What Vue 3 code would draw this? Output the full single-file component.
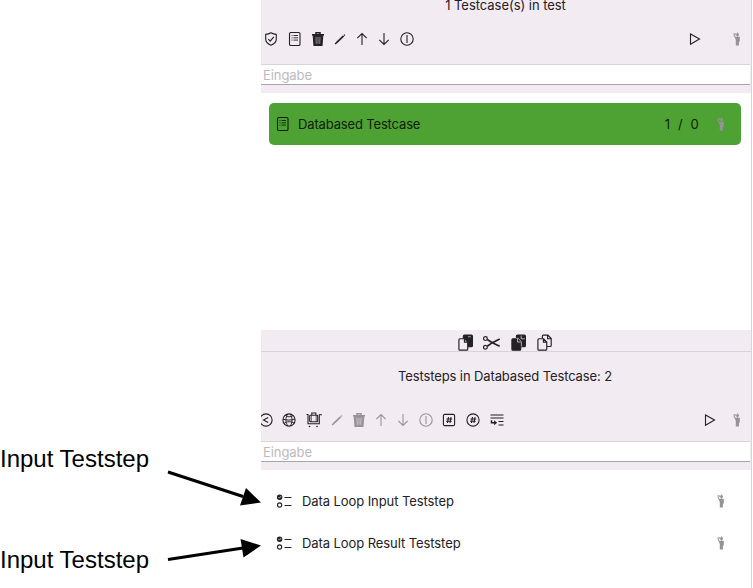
<script setup>
const icons = {
  shield: '<path d="M8 1.800c1.600 1 3.400 1.500 5.300 1.600v4.800c0 2.800-2.300 4.700-5.300 6-3-1.300-5.300-3.200-5.300-6V3.400C4.600 3.300 6.400 2.800 8 1.800Z"/><path d="m5.200 8 2 2.200 3.600-4.400"/>',
  form: '<rect x="2.500" y="1.500" width="10.500" height="13" rx="1.300"/><path d="M6.500 4.500h4.500M6.500 6.800h4.500M6.500 9.100h4.500M4.500 4.500h1M4.500 6.800h1M4.500 9.100h1" stroke-width=".9"/>',
  trash: '<path d="M2 3.700h12M6 3.200V1.700h4v1.500" stroke-width="1.500"/><path d="M3.200 4h9.600l-.8 10.500H4Z" fill="currentColor"/><path d="m6 5.800.3 7M8 5.800v7M10 5.800l-.3 7" stroke="#f2ebf2" stroke-width=".5"/>',
  pencil: '<path d="m4.300 11.900 7.300-7" stroke-width="1.700"/><path d="m3.100 13 1.600-1.500M12 4.500l.9-.9" stroke-width="1.300"/>',
  up: '<path d="M8 14V2.500M3.300 7.200 8 2.500l4.700 4.700"/>',
  down: '<path d="M8 2v11.500M3.300 8.800 8 13.500l4.700-4.700"/>',
  toggle: '<circle cx="8" cy="8" r="6.200"/><path d="M8 4v8"/>',
  play: '<path d="M3.500 3v10.200L12.500 8.100Z"/>',
  person: '<path d="M5.500 5.800h5.300v4.700l-.9.300v3.700H6.800V9Z" fill="currentColor" stroke="none"/><circle cx="8.500" cy="3.600" r="1.500" fill="currentColor" stroke="none"/><path d="M6.800 6.800 5.200 5V2" stroke-width="1"/><path d="M6.500 2.300v1.900M8.500 1.400v4.500" stroke-width=".7"/>',
  less: '<circle cx="8" cy="8" r="6.100"/><path d="M10.200 5.400 5.500 8l4.700 2.600"/>',
  globe: '<circle cx="8" cy="8" r="6.100"/><path d="M2 7.200c4 1.200 8 1.200 12-.3M3 11.500c3-2.300 7-2.400 10.300-.3M4.200 3.300c2.500 1.900 5.500 2 7.900.2M6.700 2c-2.600 4-2.200 8.500.2 12M9 2c2.800 3.800 2.700 8 .3 12" stroke-width=".95"/>',
  cart: '<path d="M.5 2.500H2v9.200h11.300V2.800H16"/><rect x="3.700" y="3.200" width="8" height="6.500" rx=".7"/><path d="M5.800 3V1h4v2"/><path d="M5.300 3.400v6.200M10.200 3.400v6.200" stroke-width=".7"/><circle cx="3.500" cy="14.500" r=".8" fill="currentColor" stroke="none"/><circle cx="11" cy="14.500" r=".8" fill="currentColor" stroke="none"/>',
  hashBox: '<rect x="2.400" y="2.400" width="11.200" height="11.200" rx="1.400"/><path d="m7.500 5-1 6M10 5l-1 6M5.500 7h5.700M5 9.200h5.700"/>',
  hashCircle: '<circle cx="8" cy="8" r="6.100"/><path d="m7.500 5-1 6M10 5l-1 6M5.500 7h5.700M5 9.200h5.700"/>',
  insert: '<path d="M1.500 3h13M1.500 6h13M9.500 9.500h5M9.500 13h5"/><path d="M2.500 8.200v2.600h3.500" stroke-width="1.500"/><path d="m5.100 8.300 3 2.500-3 2.500Z" fill="currentColor" stroke="none"/>',
  steps: '<circle cx="3.600" cy="4.200" r="2.200" fill="currentColor"/><path d="m2.500 4.200.9.900L5 3.200" stroke="#fff" stroke-width=".7"/><circle cx="3.600" cy="12" r="2.100"/><path d="M8.500 4.500h7M8.500 12.500h7" stroke-width="1"/>',
  copy: '<path d="M6 2q0-1 1-1h6.500q1 0 1 1v9q0 1-1 1H10V7L7 4H6Z" fill="currentColor"/><path d="M2.700 4.500h4.500l2.900 3v6.800q0 .9-.9.900H2.700q-.9 0-.9-.9V5.400q0-.9.900-.9Z" fill="#f2ebf2"/><path d="M7 4.700v3h3"/><path d="M10.300 2.600h2.700" stroke="#f2ebf2" stroke-width=".6"/>',
  cut: '<circle cx="2.300" cy="4.300" r="1.800"/><circle cx="2.300" cy="12.500" r="1.800"/><path d="m4 5.200 4.800 3L15.700 11.500M4 11.500l4.800-3.300 6.900-3.500" stroke-width="1.500"/>',
  paste: '<path d="M6 2q0-1 1-1h6.500q1 0 1 1v9q0 1-1 1H7Z" fill="currentColor"/><path d="M2.700 4.500h4.500l2.900 3v6.800q0 .9-.9.900H2.700q-.9 0-.9-.9V5.400q0-.9.900-.9Z" fill="currentColor"/><path d="M6 4h1.700l3 3.300v4.500M7.100 4.600v3h3M10.500 1.500v3h3.500" stroke="#f2ebf2" stroke-width=".65"/>',
  duplicate: '<path d="M6 4V2q0-.9.900-.9h4.300l3.100 3.100v6.700q0 .9-.9.900h-3M10.900 1.300v3.200h3.200"/><path d="M2.700 4.500h4.500l2.900 3v6.800q0 .9-.9.900H2.700q-.9 0-.9-.9V5.400q0-.9.900-.9ZM7 4.700v3h3"/>'
}

const caseTools = [
  { icon: 'shield', width: 24 },
  { icon: 'form', width: 24 },
  { icon: 'trash', width: 22 },
  { icon: 'pencil', width: 22 },
  { icon: 'up', width: 22 },
  { icon: 'down', width: 22 },
  { icon: 'toggle', width: 23 }
]

const stepTools = [
  { icon: 'less', width: 22 },
  { icon: 'globe', width: 24 },
  { icon: 'cart', width: 25 },
  { icon: 'pencil', width: 21, disabled: true },
  { icon: 'trash', width: 23, disabled: true },
  { icon: 'up', width: 22, disabled: true },
  { icon: 'down', width: 22, disabled: true },
  { icon: 'toggle', width: 23, disabled: true },
  { icon: 'hashBox', width: 24 },
  { icon: 'hashCircle', width: 23 },
  { icon: 'insert', width: 25 }
]

const clipboardTools = ['copy', 'cut', 'paste', 'duplicate']
const steps = ['Data Loop Input Teststep', 'Data Loop Result Teststep']
</script>

<template>
  <div class="page">
    <aside class="notes">
      <div class="note first">Input Teststep</div>
      <div class="note second">Input Teststep</div>
      <svg class="arrows" viewBox="0 0 261 588">
        <path class="shaft" d="M168 472 243 496.500M168 559.500 243 548" />
        <path d="M261 502.500 240 505.500 246 488ZM261 545.500 243.500 557.500 240.500 539Z" />
      </svg>
    </aside>

    <main class="panel">
      <header class="head cases">
        <h2 class="title">1 Testcase(s) in test</h2>
        <div class="toolbar">
          <span v-for="t in caseTools" :key="t.icon" class="tool" :style="{ width: t.width + 'px' }">
            <svg class="icon" viewBox="0 0 16 16" v-html="icons[t.icon]" />
          </span>
          <svg class="icon play" viewBox="0 0 16 16" v-html="icons.play" />
          <svg class="icon person" viewBox="0 0 16 16" v-html="icons.person" />
        </div>
        <input class="filter" placeholder="Eingabe" />
      </header>

      <section class="list case-list">
        <div class="row selected">
          <svg class="icon" viewBox="0 0 16 16" v-html="icons.form" />
          <span class="name">Databased Testcase</span>
          <span class="count">1&nbsp; /&nbsp; 0</span>
          <svg class="icon person" viewBox="0 0 16 16" v-html="icons.person" />
        </div>
      </section>

      <div class="clipboard">
        <svg v-for="c in clipboardTools" :key="c" class="clip-icon" viewBox="0 0 16 16" v-html="icons[c]" />
      </div>

      <header class="head steps">
        <h2 class="title">Teststeps in Databased Testcase: 2</h2>
        <div class="toolbar">
          <span
            v-for="t in stepTools"
            :key="t.icon"
            class="tool"
            :class="{ disabled: t.disabled }"
            :style="{ width: t.width + 'px' }"
          >
            <svg class="icon" viewBox="0 0 16 16" v-html="icons[t.icon]" />
          </span>
          <svg class="icon play" viewBox="0 0 16 16" v-html="icons.play" />
          <svg class="icon person" viewBox="0 0 16 16" v-html="icons.person" />
        </div>
        <input class="filter" placeholder="Eingabe" />
      </header>

      <section class="list">
        <div v-for="s in steps" :key="s" class="row step">
          <svg class="icon" viewBox="0 0 16 16" v-html="icons.steps" />
          <span class="name">{{ s }}</span>
          <svg class="icon person" viewBox="0 0 16 16" v-html="icons.person" />
        </div>
      </section>
    </main>
  </div>
</template>

<style>
body {
  background: #fff;
}
</style>

<style scoped>
.page {
  display: flex;
  width: 753px;
  height: 588px;
  overflow: hidden;
  color: #242124;
  font-family: Inter, "Liberation Sans", sans-serif;
  font-size: 13px;
  letter-spacing: -0.08px;
}
.notes {
  position: relative;
  flex: none;
  box-sizing: border-box;
  width: 261px;
  padding-top: 445px;
  color: #000;
  font: 24px/28px "Liberation Sans", sans-serif;
  letter-spacing: 0;
}
.note {
  white-space: nowrap;
}
.second {
  margin-top: 73px;
}
.arrows {
  position: absolute;
  inset: 0;
  width: 261px;
  height: 588px;
}
.shaft {
  fill: none;
  stroke: #000;
  stroke-width: 3;
}
.panel {
  display: flex;
  flex-direction: column;
  width: 490px;
  border-right: 1px solid #d8d3d8;
}
.head {
  box-sizing: border-box;
  flex: none;
  background: #f2ebf2;
  overflow: hidden;
}
.cases {
  height: 93px;
}
.steps {
  height: 118px;
  padding-top: 16px;
}
.title {
  margin: 0;
  padding-right: 1px;
  font-size: 13px;
  font-weight: 400;
  line-height: 16px;
  text-align: center;
}
.steps .title {
  padding-right: 2px;
  letter-spacing: -0.11px;
}
.cases .title {
  height: 13px;
  line-height: 10px;
  letter-spacing: -0.04px;
}
.toolbar {
  display: flex;
  align-items: center;
  height: 30px;
}
.cases .toolbar {
  margin: 11px 0 10px;
  padding-right: 6px;
}
.steps .toolbar {
  margin: 21px 0 6px;
  padding-right: 6px;
}
.cases .tool:first-child {
  margin-left: -2px;
}
.steps .tool:first-child {
  margin-left: -6px;
}
.tool {
  display: flex;
  flex: none;
  justify-content: center;
}
.disabled {
  color: #9a949a;
}
.icon {
  display: block;
  flex: none;
  width: 16px;
  height: 16px;
  fill: none;
  stroke: currentColor;
  stroke-width: 1.1;
}
.play {
  margin-left: auto;
}
.cases .play {
  margin-right: 26px;
}
.steps .play {
  margin-right: 11px;
}
.person {
  color: #969296;
}
.filter {
  display: block;
  box-sizing: border-box;
  width: 489px;
  height: 21px;
  padding: 0 2px;
  border: 0;
  border-top: 1px solid #dbd3dc;
  border-bottom: 1px solid #aaa4aa;
  border-radius: 0;
  outline: 0;
  background: #fff;
  font: 13px Inter, "Liberation Sans", sans-serif;
  letter-spacing: -0.08px;
}
.filter::placeholder {
  color: #bdbabd;
}
.list {
  box-sizing: border-box;
  padding: 10px 10px 0 8px;
}
.case-list {
  height: 237px;
}
.row {
  display: flex;
  align-items: center;
  box-sizing: border-box;
  height: 42px;
  padding: 0 12px 0 6px;
  border-radius: 5px;
}
.selected {
  background: #4ea234;
  color: #101d0d;
}
.selected .name {
  margin-left: 7px;
  letter-spacing: -0.15px;
}
.row .person {
  color: #969296;
}
.step .name {
  margin-left: 10px;
}
.step {
  padding-left: 7px;
}
.name {
  flex: 1;
}
.count {
  margin-right: 14px;
  letter-spacing: 0.2px;
}
.clipboard {
  display: flex;
  align-items: center;
  justify-content: center;
  gap: 9.300px;
  box-sizing: border-box;
  flex: none;
  height: 22px;
  padding: 3px 2px 0 0;
  border-bottom: 1px solid #d9d2da;
  background: #f2ebf2;
}
.clip-icon {
  flex: none;
  width: 17px;
  height: 17px;
  fill: none;
  stroke: currentColor;
  stroke-width: 1.1;
}
</style>
